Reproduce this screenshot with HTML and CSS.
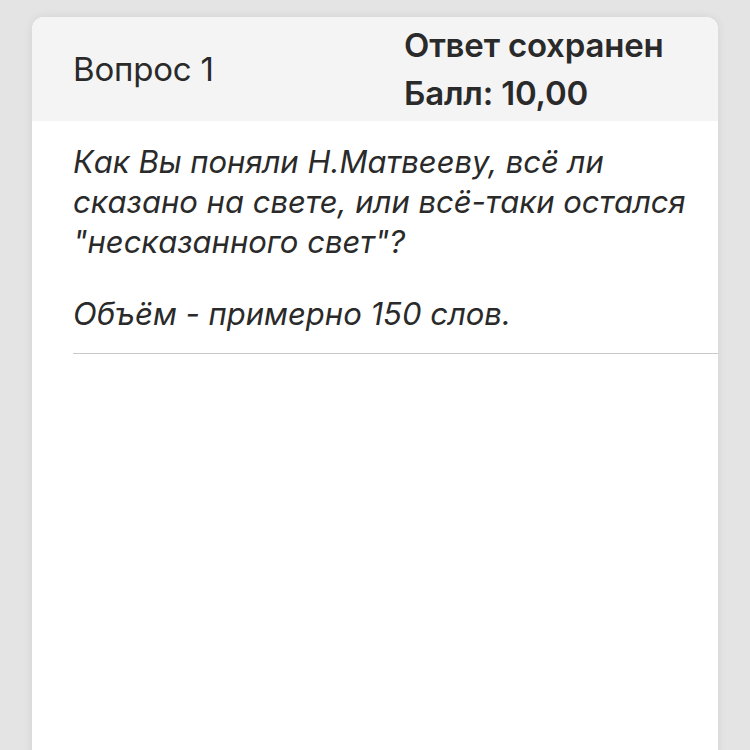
FILE: index.html
```html
<!DOCTYPE html>
<html lang="ru">
<head>
<meta charset="utf-8">
<link rel="stylesheet" href="styles.css">
</head>
<body>
<div class="page">
  <div class="card">
    <div class="card-header">
      <div class="q-title">Вопрос 1</div>
      <div class="q-status">
        <div class="status-line">Ответ сохранен</div>
        <div class="status-line">Балл: 10,00</div>
      </div>
    </div>
    <div class="card-body">
      <p class="q-text">Как Вы поняли Н.Матвееву, всё ли сказано на свете, или всё-таки остался "несказанного свет"?</p>
      <p class="q-text">Объём - примерно 150 слов.</p>
      <div class="divider"></div>
    </div>
  </div>
</div>
</body>
</html>
```

FILE: styles.css
```css
html, body {
  margin: 0;
  padding: 0;
  background: #e4e4e4;
  font-family: Inter, "Noto Sans", sans-serif;
  color: #2a2a2a;
}

.page {
  width: 750px;
  height: 750px;
  overflow: hidden;
  padding: 17px 32px 0 32px;
  box-sizing: border-box;
}

.card {
  background: #ffffff;
  border-radius: 12px 12px 0 0;
  height: 760px;
  box-shadow: 0 0 10px rgba(0, 0, 0, 0.08);
  overflow: hidden;
}

.card-header {
  background: #f4f4f4;
  height: 104px;
  display: grid;
  grid-template-columns: 331px 1fr;
  align-items: center;
  padding: 0 0 0 41px;
}

.q-title {
  font-size: 33px;
  font-weight: 400;
  letter-spacing: -0.2px;
}

.q-status {
  display: flex;
  flex-direction: column;
}

.status-line {
  font-size: 33px;
  font-weight: 600;
  line-height: 48px;
  letter-spacing: -0.2px;
}

.card-body {
  padding: 21px 0 0 41px;
}

.q-text {
  margin: 0 0 32px 0;
  font-size: 31px;
  font-style: italic;
  line-height: 40px;
}

.q-text:last-of-type {
  margin-bottom: 19px;
}

.divider {
  height: 1px;
  background: #c9c9c9;
}
```
